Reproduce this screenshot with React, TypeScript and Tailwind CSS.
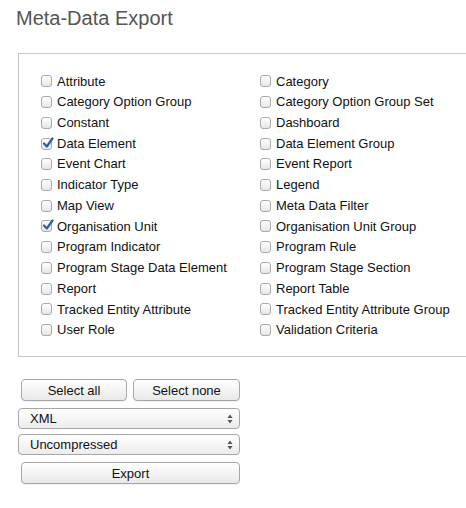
const left = [
  { label: "Attribute" },
  { label: "Category Option Group" },
  { label: "Constant" },
  { label: "Data Element", checked: true },
  { label: "Event Chart" },
  { label: "Indicator Type" },
  { label: "Map View" },
  { label: "Organisation Unit", checked: true },
  { label: "Program Indicator" },
  { label: "Program Stage Data Element" },
  { label: "Report" },
  { label: "Tracked Entity Attribute" },
  { label: "User Role" },
];

const right = [
  "Category",
  "Category Option Group Set",
  "Dashboard",
  "Data Element Group",
  "Event Report",
  "Legend",
  "Meta Data Filter",
  "Organisation Unit Group",
  "Program Rule",
  "Program Stage Section",
  "Report Table",
  "Tracked Entity Attribute Group",
  "Validation Criteria",
];

function Box({ checked }: { checked?: boolean }) {
  return (
    <span className="relative inline-block w-[11px] h-[12px] rounded-[3px] border border-[#a9a9a9] bg-gradient-to-b from-[#ffffff] to-[#e6e6e6] shadow-[inset_0_1px_0_#fff] mr-[5px] shrink-0">
      {checked && (
        <svg viewBox="0 0 12 12" className="absolute -top-[2px] left-[0px] w-[12px] h-[12px]">
          <path d="M2 6.5 L4.8 9.5 L10.5 1.5" fill="none" stroke="#2a5db0" strokeWidth="2.2" strokeLinecap="round" strokeLinejoin="round" />
        </svg>
      )}
    </span>
  );
}

function Row({ label, checked }: { label: string; checked?: boolean }) {
  return (
    <div className="flex items-center h-[20.72px] text-[13px] text-[#111] whitespace-nowrap">
      <Box checked={checked} />
      <span>{label}</span>
    </div>
  );
}

function UpDown() {
  return (
    <svg viewBox="0 0 6 10" className="w-[6px] h-[10px]">
      <path d="M3 0.5 L5.5 4 L0.5 4 Z" fill="#555" />
      <path d="M3 9.5 L5.5 6 L0.5 6 Z" fill="#555" />
    </svg>
  );
}

const btn =
  "h-[22px] rounded-[4px] border border-[#a6a6a6] bg-gradient-to-b from-[#ffffff] to-[#e9e9e9] shadow-[0_1px_0_rgba(0,0,0,0.05)] text-[13px] text-[#111] flex items-center justify-center";

const sel =
  "h-[21px] rounded-[4px] border border-[#a6a6a6] bg-gradient-to-b from-[#ffffff] to-[#ececec] flex items-center justify-between pl-[11px] pr-[6px] text-[13px] text-[#111]";

export default function App() {
  return (
    <div className="w-[466px] h-[508px] overflow-hidden bg-white font-['Liberation_Sans',Arial,sans-serif]">
      <h1 className="pl-[16px] pt-[6px] text-[20px] leading-[24px] text-[#555]">Meta-Data Export</h1>

      {/* object type checklist */}
      <div className="ml-[18px] mt-[23px] w-[460px] border border-[#c8c8c8] pt-[17px] pb-[16px] pl-[22px]">
        <div className="grid grid-cols-[219px_1fr]">
          <div>
            {left.map((r) => (
              <Row key={r.label} label={r.label} checked={r.checked} />
            ))}
          </div>
          <div>
            {right.map((r) => (
              <Row key={r} label={r} />
            ))}
          </div>
        </div>
      </div>

      {/* controls */}
      <div className="ml-[18px] mt-[22px] w-[222px] flex flex-col">
        <div className="flex gap-[6px] pl-[3px]">
          <button className={`${btn} w-[106px]`}>Select all</button>
          <button className={`${btn} w-[107px]`}>Select none</button>
        </div>
        <div className={`${sel} mt-[7px]`}>
          <span>XML</span>
          <UpDown />
        </div>
        <div className={`${sel} mt-[5px]`}>
          <span>Uncompressed</span>
          <UpDown />
        </div>
        <div className="pl-[3px] mt-[7px]">
          <button className={`${btn} w-[219px]`}>Export</button>
        </div>
      </div>
    </div>
  );
}
